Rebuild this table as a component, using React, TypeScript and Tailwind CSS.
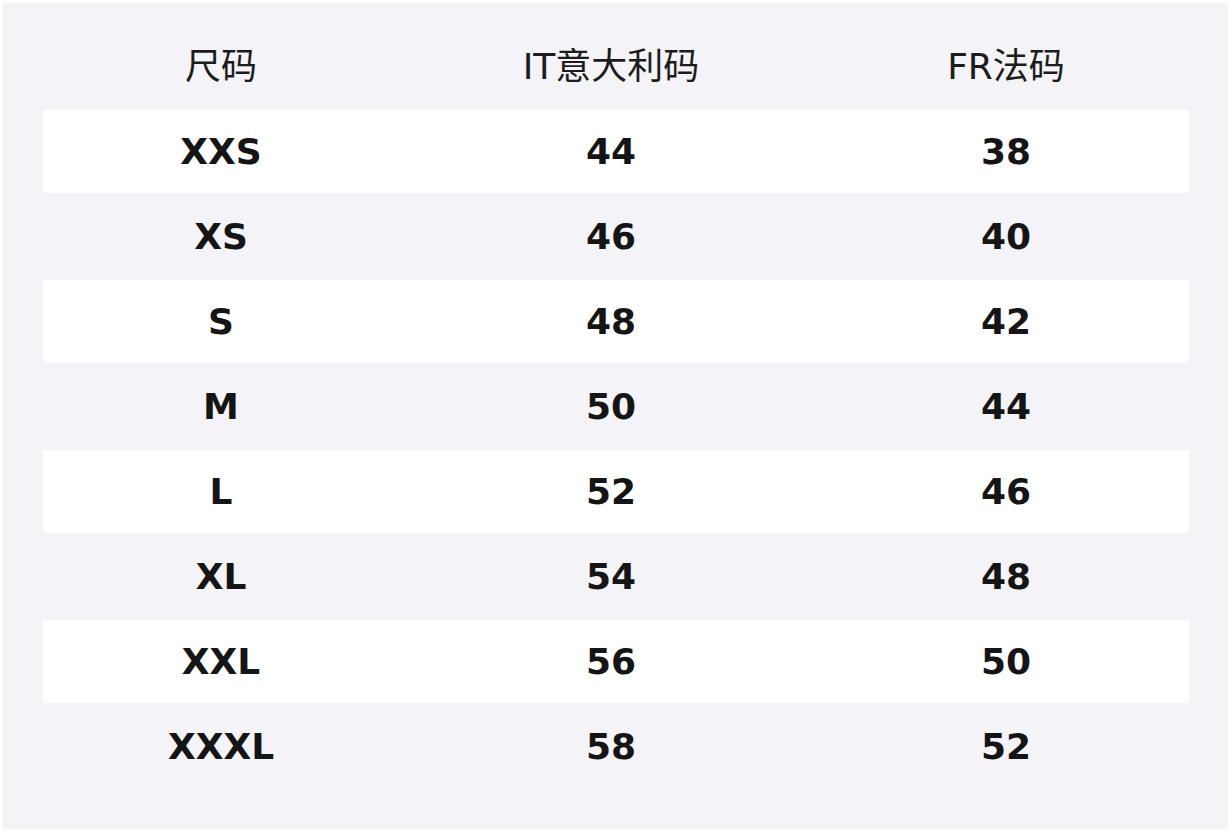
import React from "react";

const rows: [string, string, string][] = [
  ["XXS", "44", "38"],
  ["XS", "46", "40"],
  ["S", "48", "42"],
  ["M", "50", "44"],
  ["L", "52", "46"],
  ["XL", "54", "48"],
  ["XXL", "56", "50"],
  ["XXXL", "58", "52"],
];

export default function App() {
  return (
    <div
      className="w-[1232px] h-[833px] bg-white pt-[3px] pl-[3px]"
      style={{ fontFamily: '"DejaVu Sans", "Noto Sans CJK SC", sans-serif' }}
    >
      <div className="w-[1225px] h-[826px] bg-[#f3f3f8] rounded-[2px] pt-[22px] px-[40px]">
        <div className="flex flex-col gap-[2px] w-[1146px]">
          <div className="grid grid-cols-[356px_424px_366px] h-[83px] items-center text-[36px] text-[#1c1c1c]">
            <div className="text-center">尺码</div>
            <div className="text-center">IT意大利码</div>
            <div className="text-center">FR法码</div>
          </div>
          {rows.map((r, i) => (
            <div
              key={r[0]}
              className={
                "grid grid-cols-[356px_424px_366px] h-[83px] items-center text-[36px] font-bold text-[#151515] rounded-[3px] " +
                (i % 2 === 0 ? "bg-white" : "bg-transparent")
              }
            >
              <div className="text-center">{r[0]}</div>
              <div className="text-center">{r[1]}</div>
              <div className="text-center">{r[2]}</div>
            </div>
          ))}
        </div>
      </div>
    </div>
  );
}
